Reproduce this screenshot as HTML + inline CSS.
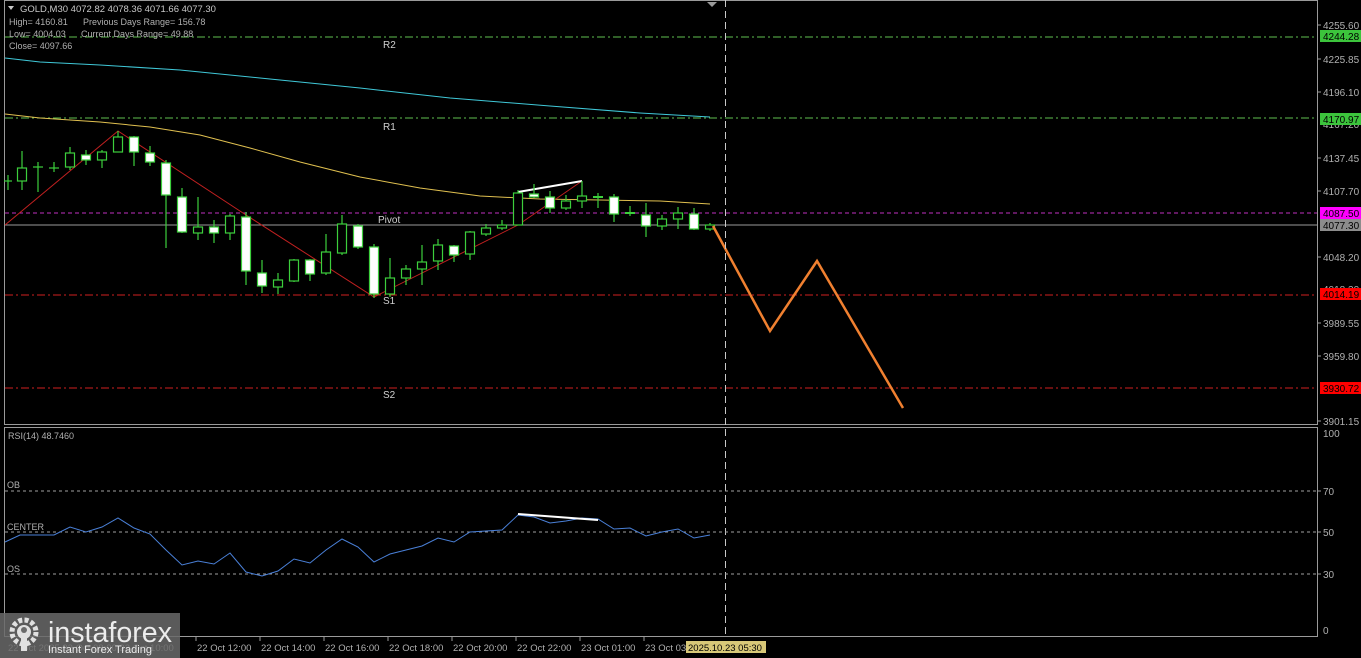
<!DOCTYPE html>
<html><head><meta charset="utf-8"><style>
html,body{margin:0;padding:0;background:#000;width:1361px;height:658px;overflow:hidden}
svg{display:block}
text{font-family:"Liberation Sans",sans-serif}
</style></head><body>
<svg width="1361" height="658" viewBox="0 0 1361 658" xmlns="http://www.w3.org/2000/svg">
<rect width="1361" height="658" fill="#000"/>
<rect x="4.5" y="0.5" width="1313" height="424" fill="none" stroke="#9a9a9a"/>
<rect x="4.5" y="427.5" width="1313" height="209" fill="none" stroke="#9a9a9a"/>
<g stroke="#9a9a9a">
<line x1="1318" y1="25" x2="1321" y2="25"/><line x1="1318" y1="59" x2="1321" y2="59"/><line x1="1318" y1="92" x2="1321" y2="92"/><line x1="1318" y1="158" x2="1321" y2="158"/><line x1="1318" y1="191" x2="1321" y2="191"/><line x1="1318" y1="257" x2="1321" y2="257"/><line x1="1318" y1="323" x2="1321" y2="323"/><line x1="1318" y1="356" x2="1321" y2="356"/><line x1="1318" y1="421" x2="1321" y2="421"/>
<line x1="1318" y1="491" x2="1321" y2="491"/><line x1="1318" y1="532" x2="1321" y2="532"/><line x1="1318" y1="574" x2="1321" y2="574"/>
</g>
<g font-size="10" fill="#b0b0b0">
<text x="1323" y="29">4255.60</text><text x="1323" y="63">4225.85</text><text x="1323" y="96">4196.10</text><text x="1323" y="128">4167.20</text><text x="1323" y="162">4137.45</text><text x="1323" y="195">4107.70</text><text x="1323" y="261">4048.20</text><text x="1323" y="293">4018.30</text><text x="1323" y="327">3989.55</text><text x="1323" y="360">3959.80</text><text x="1323" y="425">3901.15</text>
<text x="1323" y="437">100</text><text x="1323" y="495">70</text><text x="1323" y="536">50</text><text x="1323" y="578">30</text><text x="1323" y="634">0</text>
</g>
<rect x="1320" y="30" width="41" height="12" fill="#3cc43c"/><text x="1323" y="40" font-size="10" fill="#000">4244.28</text>
<rect x="1320" y="113" width="41" height="12" fill="#3cc43c"/><text x="1323" y="123" font-size="10" fill="#000">4170.97</text>
<rect x="1320" y="207" width="41" height="12" fill="#ff00ff"/><text x="1323" y="217" font-size="10" fill="#000">4087.50</text>
<rect x="1320" y="219" width="41" height="12" fill="#8c8c8c"/><text x="1323" y="229" font-size="10" fill="#000">4077.30</text>
<rect x="1320" y="288" width="41" height="12" fill="#f00"/><text x="1323" y="298" font-size="10" fill="#000">4014.19</text>
<rect x="1320" y="382" width="41" height="12" fill="#f00"/><text x="1323" y="392" font-size="10" fill="#000">3930.72</text>
<line x1="5" y1="37" x2="1317" y2="37" stroke="#5fbf4f" stroke-dasharray="8,3,2,3"/>
<line x1="5" y1="118" x2="1317" y2="118" stroke="#5fbf4f" stroke-dasharray="8,3,2,3"/>
<line x1="5" y1="213" x2="1317" y2="213" stroke="#c030c0" stroke-dasharray="4,3"/>
<line x1="5" y1="225" x2="1317" y2="225" stroke="#9a9a9a"/>
<line x1="5" y1="295" x2="1317" y2="295" stroke="#d02020" stroke-dasharray="8,3,2,3"/>
<line x1="5" y1="388" x2="1317" y2="388" stroke="#d02020" stroke-dasharray="8,3,2,3"/>
<g font-size="10" fill="#d0d0d0">
<text x="383" y="48">R2</text><text x="383" y="130">R1</text><text x="378" y="223">Pivot</text><text x="383" y="304">S1</text><text x="383" y="398">S2</text>
</g>
<polyline fill="none" stroke="#40c8d8" points="5,58 40,62 100,65 180,70 260,78 360,88 450,98 550,106 640,113 710,117"/>
<polyline fill="none" stroke="#e0c050" points="5,114 40,118 100,122 150,127 200,135 250,148 300,162 360,177 420,188 480,196 540,199 600,200 660,201 710,204"/>
<polyline fill="none" stroke="#c02020" points="5,225 118,131 246,215 374,297 518,225 582,181"/>
<line x1="518" y1="192" x2="582" y2="181" stroke="#fff" stroke-width="2"/>
<g stroke="#3ccf3c" stroke-width="1.2">
<line x1="8" y1="175" x2="8" y2="190"/><line x1="4" y1="181" x2="12" y2="181"/>
<line x1="22" y1="151" x2="22" y2="190"/><rect x="17.5" y="168" width="9" height="13" fill="#000"/>
<line x1="38" y1="162" x2="38" y2="192"/><line x1="33" y1="167" x2="43" y2="167"/>
<line x1="54" y1="162" x2="54" y2="172"/><line x1="49" y1="168" x2="59" y2="168"/>
<line x1="70" y1="147" x2="70" y2="170"/><rect x="65.5" y="153" width="9" height="14" fill="#000"/>
<line x1="86" y1="150" x2="86" y2="165"/><rect x="81.5" y="155" width="9" height="5" fill="#fff"/>
<line x1="102" y1="150" x2="102" y2="168"/><rect x="97.5" y="152" width="9" height="8" fill="#000"/>
<line x1="118" y1="131" x2="118" y2="152"/><rect x="113.5" y="137" width="9" height="15" fill="#000"/>
<line x1="134" y1="136" x2="134" y2="166"/><rect x="129.5" y="137" width="9" height="15" fill="#fff"/>
<line x1="150" y1="146" x2="150" y2="166"/><rect x="145.5" y="153" width="9" height="9" fill="#fff"/>
<line x1="166" y1="160" x2="166" y2="248"/><rect x="161.5" y="163" width="9" height="32" fill="#fff"/>
<line x1="182" y1="188" x2="182" y2="233"/><rect x="177.5" y="197" width="9" height="35" fill="#fff"/>
<line x1="198" y1="197" x2="198" y2="240"/><rect x="193.5" y="227" width="9" height="6" fill="#000"/>
<line x1="214" y1="220" x2="214" y2="243"/><rect x="209.5" y="227" width="9" height="6" fill="#fff"/>
<line x1="230" y1="214" x2="230" y2="240"/><rect x="225.5" y="216" width="9" height="17" fill="#000"/>
<line x1="246" y1="212" x2="246" y2="285"/><rect x="241.5" y="217" width="9" height="54" fill="#fff"/>
<line x1="262" y1="260" x2="262" y2="293"/><rect x="257.5" y="273" width="9" height="13" fill="#fff"/>
<line x1="278" y1="273" x2="278" y2="294"/><rect x="273.5" y="280" width="9" height="7" fill="#000"/>
<line x1="294" y1="259" x2="294" y2="282"/><rect x="289.5" y="260" width="9" height="21" fill="#000"/>
<line x1="310" y1="259" x2="310" y2="281"/><rect x="305.5" y="260" width="9" height="14" fill="#fff"/>
<line x1="326" y1="234" x2="326" y2="275"/><rect x="321.5" y="252" width="9" height="21" fill="#000"/>
<line x1="342" y1="215" x2="342" y2="255"/><rect x="337.5" y="224" width="9" height="29" fill="#000"/>
<line x1="358" y1="224" x2="358" y2="249"/><rect x="353.5" y="226" width="9" height="21" fill="#fff"/>
<line x1="374" y1="244" x2="374" y2="298"/><rect x="369.5" y="247" width="9" height="47" fill="#fff"/>
<line x1="390" y1="258" x2="390" y2="297"/><rect x="385.5" y="278" width="9" height="16" fill="#000"/>
<line x1="406" y1="265" x2="406" y2="285"/><rect x="401.5" y="269" width="9" height="9" fill="#000"/>
<line x1="422" y1="245" x2="422" y2="285"/><rect x="417.5" y="262" width="9" height="7" fill="#000"/>
<line x1="438" y1="239" x2="438" y2="270"/><rect x="433.5" y="245" width="9" height="16" fill="#000"/>
<line x1="454" y1="245" x2="454" y2="262"/><rect x="449.5" y="246" width="9" height="9" fill="#fff"/>
<line x1="470" y1="231" x2="470" y2="260"/><rect x="465.5" y="232" width="9" height="22" fill="#000"/>
<line x1="486" y1="224" x2="486" y2="236"/><rect x="481.5" y="228" width="9" height="6" fill="#000"/>
<line x1="502" y1="220" x2="502" y2="230"/><rect x="497.5" y="225" width="9" height="3" fill="#000"/>
<line x1="518" y1="190" x2="518" y2="225"/><rect x="513.5" y="193" width="9" height="32" fill="#000"/>
<line x1="534" y1="184" x2="534" y2="198"/><rect x="529.5" y="194" width="9" height="3" fill="#fff"/>
<line x1="550" y1="191" x2="550" y2="213"/><rect x="545.5" y="197" width="9" height="11" fill="#fff"/>
<line x1="566" y1="195" x2="566" y2="210"/><rect x="561.5" y="201" width="9" height="7" fill="#000"/>
<line x1="582" y1="181" x2="582" y2="208"/><rect x="577.5" y="196" width="9" height="5" fill="#000"/>
<line x1="598" y1="193" x2="598" y2="208"/><line x1="593" y1="197" x2="603" y2="197" stroke-width="2"/>
<line x1="614" y1="194" x2="614" y2="222"/><rect x="609.5" y="197" width="9" height="17" fill="#fff"/>
<line x1="630" y1="206" x2="630" y2="216"/><line x1="625" y1="213" x2="635" y2="213" stroke-width="2"/>
<line x1="646" y1="203" x2="646" y2="237"/><rect x="641.5" y="215" width="9" height="11" fill="#fff"/>
<line x1="662" y1="215" x2="662" y2="230"/><rect x="657.5" y="219" width="9" height="7" fill="#000"/>
<line x1="678" y1="207" x2="678" y2="229"/><rect x="673.5" y="213" width="9" height="6" fill="#000"/>
<line x1="694" y1="208" x2="694" y2="230"/><rect x="689.5" y="214" width="9" height="15" fill="#fff"/>
<line x1="710" y1="223" x2="710" y2="231"/><rect x="705.5" y="225" width="9" height="4" fill="#000"/>
</g>
<polyline fill="none" stroke="#f08030" stroke-width="2.5" points="713,226 770,331 817,261 903,408"/>
<line x1="725.5" y1="0" x2="725.5" y2="637" stroke="#c8c8c8" stroke-dasharray="7,4"/>
<polygon points="707,2 717,2 712,7" fill="#9a9a9a"/>
<polygon points="8,6 14,6 11,10" fill="#c8c8c8"/>
<g font-size="9.5" fill="#c8c8c8"><text x="20" y="12">GOLD,M30  4072.82 4078.36 4071.66 4077.30</text></g>
<g font-size="9" fill="#b0b0b0">
<text x="9" y="25">High= 4160.81</text><text x="83" y="25">Previous Days Range= 156.78</text>
<text x="9" y="37">Low= 4004.03</text><text x="81" y="37">Current Days Range= 49.88</text>
<text x="9" y="49">Close= 4097.66</text>
</g>
<text x="8" y="439" font-size="9" fill="#b0b0b0">RSI(14) 48.7460</text>
<g stroke="#a0a0a0" stroke-dasharray="3,3"><line x1="5" y1="491" x2="1317" y2="491"/><line x1="5" y1="532" x2="1317" y2="532"/><line x1="5" y1="574" x2="1317" y2="574"/></g>
<g font-size="9" fill="#b0b0b0"><text x="7" y="488">OB</text><text x="7" y="530">CENTER</text><text x="7" y="572">OS</text></g>
<polyline fill="none" stroke="#4a80d8" points="5,542 20,535 40,535 54,535 70,527 86,532 102,527 118,518 134,528 150,534 166,550 182,565 198,561 214,564 230,553 246,572 262,576 278,571 294,559 310,563 326,550 342,539 358,547 374,562 390,554 406,550 422,546 438,538 454,542 470,532 486,531 502,530 518,515 534,517 550,523 566,521 582,518 598,519 614,529 630,528 646,536 662,532 678,529 694,538 710,535"/>
<line x1="518" y1="514" x2="598" y2="520" stroke="#fff" stroke-width="2"/>
<g stroke="#9a9a9a"><line x1="196" y1="637" x2="196" y2="641"/><line x1="260" y1="637" x2="260" y2="641"/><line x1="324" y1="637" x2="324" y2="641"/><line x1="388" y1="637" x2="388" y2="641"/><line x1="452" y1="637" x2="452" y2="641"/><line x1="516" y1="637" x2="516" y2="641"/><line x1="580" y1="637" x2="580" y2="641"/><line x1="644" y1="637" x2="644" y2="641"/></g>
<g font-size="9.5" fill="#b0b0b0">
<text x="8" y="651">22 Oct 2025  22 Oct 08:00  22 Oct 10:00</text>
<text x="197" y="651">22 Oct 12:00</text><text x="261" y="651">22 Oct 14:00</text><text x="325" y="651">22 Oct 16:00</text><text x="389" y="651">22 Oct 18:00</text><text x="453" y="651">22 Oct 20:00</text><text x="517" y="651">22 Oct 22:00</text><text x="581" y="651">23 Oct 01:00</text><text x="645" y="651">23 Oct 03</text>
</g>
<rect x="686" y="641" width="80" height="12" fill="#d8c878"/>
<text x="688" y="651" font-size="9.5" fill="#000">2025.10.23 05:30</text>
<rect x="0" y="613" width="180" height="45" fill="#6a6a6a" fill-opacity="0.85"/>
<g fill="#e0e0e0">
<circle cx="24" cy="632" r="12" fill="none" stroke="#e0e0e0" stroke-width="5" stroke-dasharray="4,2.3"/>
<circle cx="24" cy="632" r="7"/>
<rect x="21" y="635" width="6" height="16"/>
</g>
<circle cx="24" cy="630" r="3" fill="#6a6a6a"/>
<text x="48" y="642" font-size="29" fill="#ececec" textLength="124" lengthAdjust="spacingAndGlyphs">instaforex</text>
<text x="48" y="653" font-size="11" fill="#ececec">Instant Forex Trading</text>
</svg>
</body></html>
